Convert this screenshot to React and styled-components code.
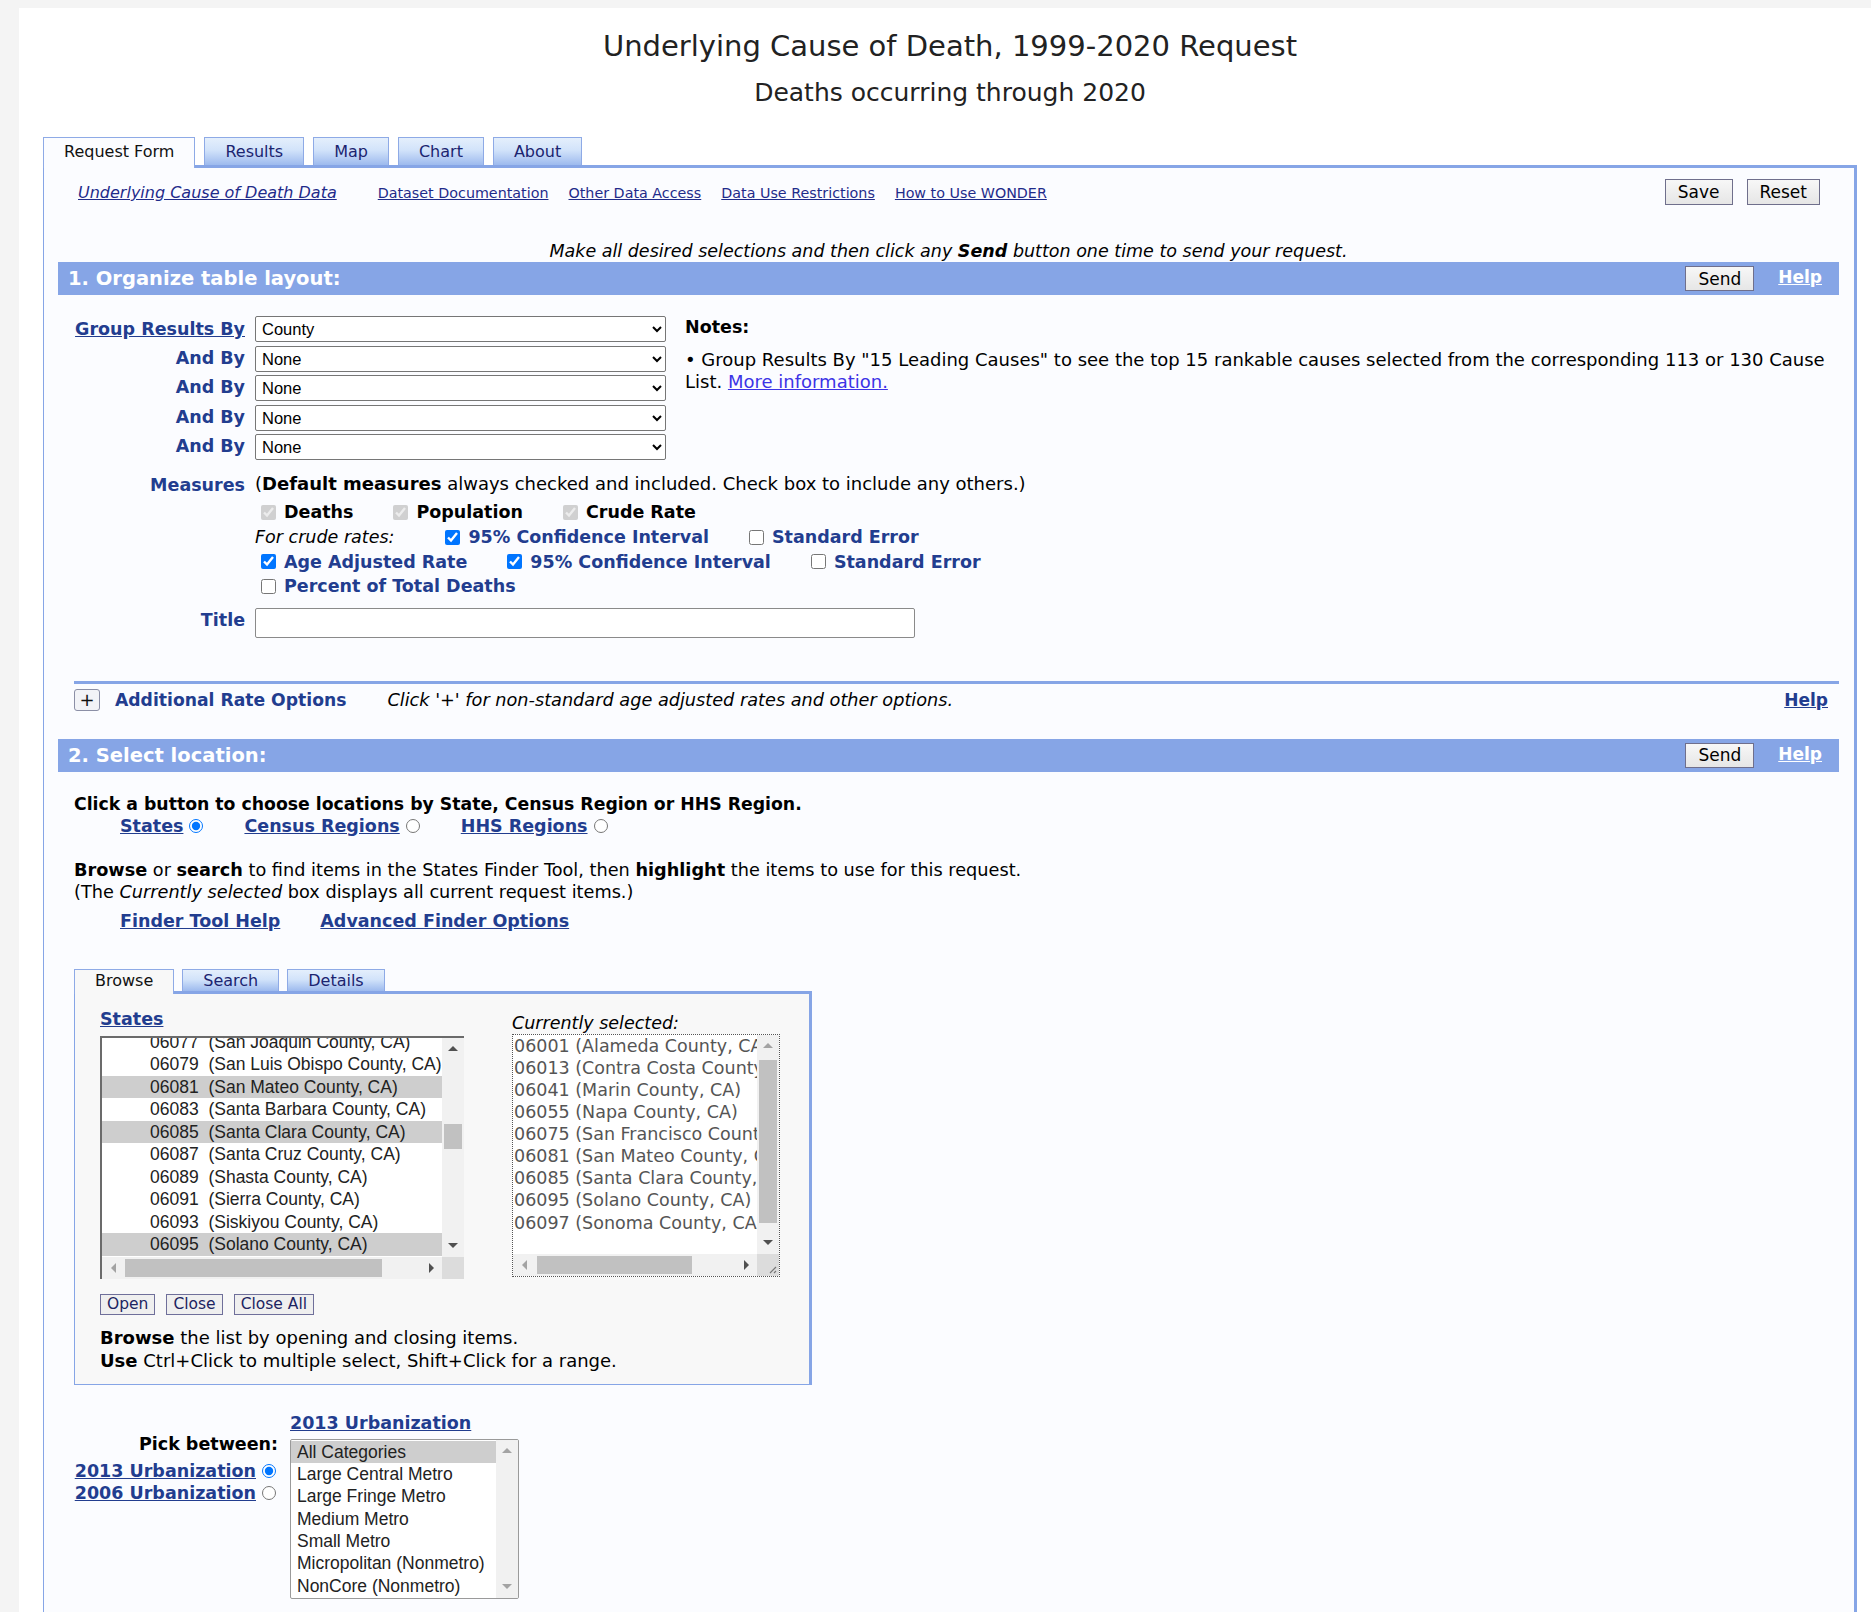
import styled, { createGlobalStyle } from "styled-components";

const VERDANA = '"DejaVu Sans", Verdana, sans-serif';
const ARIAL = '"Liberation Sans", Arial, sans-serif';
const BAR = "#86a5e6";
const LABEL = "#223d8f";
const LINK = "#1f2b8a";

const GlobalStyle = createGlobalStyle`
  html, body { margin: 0; padding: 0; background: #f4f4f4; }
  body { font-family: ${VERDANA}; color: #000; }
  * { box-sizing: border-box; }
`;

const states = [
  ["06077", "San Joaquin County, CA"],
  ["06079", "San Luis Obispo County, CA"],
  ["06081", "San Mateo County, CA", true],
  ["06083", "Santa Barbara County, CA"],
  ["06085", "Santa Clara County, CA", true],
  ["06087", "Santa Cruz County, CA"],
  ["06089", "Shasta County, CA"],
  ["06091", "Sierra County, CA"],
  ["06093", "Siskiyou County, CA"],
  ["06095", "Solano County, CA", true],
];

const selected = [
  "06001 (Alameda County, CA)",
  "06013 (Contra Costa County, CA)",
  "06041 (Marin County, CA)",
  "06055 (Napa County, CA)",
  "06075 (San Francisco County, CA)",
  "06081 (San Mateo County, CA)",
  "06085 (Santa Clara County, CA)",
  "06095 (Solano County, CA)",
  "06097 (Sonoma County, CA)",
];

const urban = [
  "All Categories",
  "Large Central Metro",
  "Large Fringe Metro",
  "Medium Metro",
  "Small Metro",
  "Micropolitan (Nonmetro)",
  "NonCore (Nonmetro)",
];

function Arrow({ dir, off }) {
  return (
    <ArrowCell>
      <Triangle $dir={dir} $off={off} />
    </ArrowCell>
  );
}

function VBar({ offset, size, upOff, downOff }) {
  return (
    <VTrackBar>
      <Arrow dir="up" off={upOff} />
      <VTrack>{size ? <VThumb $offset={offset} $size={size} /> : null}</VTrack>
      <Arrow dir="down" off={downOff} />
    </VTrackBar>
  );
}

function HBar({ offset, size }) {
  return (
    <HTrackBar>
      <Arrow dir="left" off />
      <HTrack>
        <HThumb $offset={offset} $size={size} />
      </HTrack>
      <Arrow dir="right" />
    </HTrackBar>
  );
}

export default function App() {
  return (
    <>
      <GlobalStyle />
      <Page>
        <Sheet>
          <Heading>Underlying Cause of Death, 1999-2020 Request</Heading>
          <SubHeading>Deaths occurring through 2020</SubHeading>

          <TabStrip>
            <Tab $active>Request Form</Tab>
            <Tab>Results</Tab>
            <Tab>Map</Tab>
            <Tab>Chart</Tab>
            <Tab>About</Tab>
          </TabStrip>

          <Panel>
            <TopLinks>
              <NavLink $italic>Underlying Cause of Death Data</NavLink>
              <NavLink>Dataset Documentation</NavLink>
              <NavLink>Other Data Access</NavLink>
              <NavLink>Data Use Restrictions</NavLink>
              <NavLink>How to Use WONDER</NavLink>
              <Actions>
                <ActionButton>Save</ActionButton>
                <ActionButton>Reset</ActionButton>
              </Actions>
            </TopLinks>

            <Instruction>
              Make all desired selections and then click any <b>Send</b> button one time to send your request.
            </Instruction>

            <SectionBar>
              <BarTitle>1. Organize table layout:</BarTitle>
              <BarButton>Send</BarButton>
              <BarHelp>Help</BarHelp>
            </SectionBar>

            <Organize>
              <GroupGrid>
                <FieldLabel $link>Group Results By</FieldLabel>
                <SelectBox defaultValue="County">
                  <option>County</option>
                </SelectBox>
                {[0, 1, 2, 3].map((i) => (
                  <FieldPair key={i}>
                    <FieldLabel>And By</FieldLabel>
                    <SelectBox defaultValue="None">
                      <option>None</option>
                    </SelectBox>
                  </FieldPair>
                ))}
              </GroupGrid>
              <Notes>
                <NotesTitle>Notes:</NotesTitle>
                <NotesText>
                  • Group Results By "15 Leading Causes" to see the top 15 rankable causes selected from the corresponding 113 or 130 Cause
                  List. <InfoLink>More information.</InfoLink>
                </NotesText>
              </Notes>
            </Organize>

            <FormRow $top={13}>
              <FieldLabel>Measures</FieldLabel>
              <div>
                <MeasureIntro>
                  (<b>Default measures</b> always checked and included. Check box to include any others.)
                </MeasureIntro>
                <CheckRow>
                  <CheckItem>
                    <Check type="checkbox" checked disabled readOnly />
                    <CheckText $plain>Deaths</CheckText>
                  </CheckItem>
                  <CheckItem>
                    <Check type="checkbox" checked disabled readOnly />
                    <CheckText $plain>Population</CheckText>
                  </CheckItem>
                  <CheckItem>
                    <Check type="checkbox" checked disabled readOnly />
                    <CheckText $plain>Crude Rate</CheckText>
                  </CheckItem>
                </CheckRow>
                <CheckRow>
                  <CrudeLabel>For crude rates:</CrudeLabel>
                  <CheckItem>
                    <Check type="checkbox" checked readOnly />
                    <CheckText>95% Confidence Interval</CheckText>
                  </CheckItem>
                  <CheckItem>
                    <Check type="checkbox" readOnly />
                    <CheckText>Standard Error</CheckText>
                  </CheckItem>
                </CheckRow>
                <CheckRow>
                  <CheckItem>
                    <Check type="checkbox" checked readOnly />
                    <CheckText>Age Adjusted Rate</CheckText>
                  </CheckItem>
                  <CheckItem>
                    <Check type="checkbox" checked readOnly />
                    <CheckText>95% Confidence Interval</CheckText>
                  </CheckItem>
                  <CheckItem>
                    <Check type="checkbox" readOnly />
                    <CheckText>Standard Error</CheckText>
                  </CheckItem>
                </CheckRow>
                <CheckRow>
                  <CheckItem>
                    <Check type="checkbox" readOnly />
                    <CheckText>Percent of Total Deaths</CheckText>
                  </CheckItem>
                </CheckRow>
              </div>
            </FormRow>

            <FormRow $top={9}>
              <FieldLabel>Title</FieldLabel>
              <TitleInput type="text" />
            </FormRow>

            <Divider />
            <AddlRow>
              <PlusBox>+</PlusBox>
              <AddlTitle>Additional Rate Options</AddlTitle>
              <AddlHint>Click '+' for non-standard age adjusted rates and other options.</AddlHint>
              <RightHelp>Help</RightHelp>
            </AddlRow>

            <SectionBar $top={28}>
              <BarTitle>2. Select location:</BarTitle>
              <BarButton>Send</BarButton>
              <BarHelp>Help</BarHelp>
            </SectionBar>

            <Location>
              <Lead>Click a button to choose locations by State, Census Region or HHS Region.</Lead>
              <RadioRow>
                <RadioItem>
                  <BlueLink>States</BlueLink>
                  <Radio type="radio" name="loc" defaultChecked />
                </RadioItem>
                <RadioItem>
                  <BlueLink>Census Regions</BlueLink>
                  <Radio type="radio" name="loc" />
                </RadioItem>
                <RadioItem>
                  <BlueLink>HHS Regions</BlueLink>
                  <Radio type="radio" name="loc" />
                </RadioItem>
              </RadioRow>

              <Para>
                <b>Browse</b> or <b>search</b> to find items in the States Finder Tool, then <b>highlight</b> the items to use for this request.
                <br />
                (The <i>Currently selected</i> box displays all current request items.)
              </Para>
              <LinkRow>
                <BlueLink>Finder Tool Help</BlueLink>
                <BlueLink>Advanced Finder Options</BlueLink>
              </LinkRow>

              <FinderTabs>
                <Tab $active $small $bg="#f8f8f8">Browse</Tab>
                <Tab $small>Search</Tab>
                <Tab $small>Details</Tab>
              </FinderTabs>
              <FinderPanel>
                <FinderCols>
                  <Column $w={364}>
                    <ColLabel>
                      <BlueLink>States</BlueLink>
                    </ColLabel>
                    <TreeBox>
                      <Viewport>
                        <ViewportInner $shift={-7}>
                          {states.map(([code, name, hl]) => (
                            <TreeRow key={code} $hl={hl}>
                              {code}  ({name})
                            </TreeRow>
                          ))}
                        </ViewportInner>
                      </Viewport>
                      <VBar offset={64} size={25} />
                      <HBar offset={1} size={257} />
                      <CornerCell />
                    </TreeBox>
                  </Column>
                  <Column $w={268}>
                    <SelLabel>Currently selected:</SelLabel>
                    <SelectedBox>
                      <Viewport>
                        {selected.map((s) => (
                          <SelRow key={s}>{s}</SelRow>
                        ))}
                      </Viewport>
                      <VBar offset={3} size={163} upOff />
                      <HBar offset={2} size={155} />
                      <CornerCell>
                        <Grip viewBox="0 0 22 22">
                          <path d="M19 13 L13 19 M19 17 L17 19" stroke="#777" strokeWidth="1.2" />
                        </Grip>
                      </CornerCell>
                    </SelectedBox>
                  </Column>
                </FinderCols>
                <SmallButtons>
                  <SmallButton>Open</SmallButton>
                  <SmallButton>Close</SmallButton>
                  <SmallButton>Close All</SmallButton>
                </SmallButtons>
                <HelpText>
                  <b>Browse</b> the list by opening and closing items.
                  <br />
                  <b>Use</b> Ctrl+Click to multiple select, Shift+Click for a range.
                </HelpText>
              </FinderPanel>

              <UrbanGrid>
                <PickCol>
                  <PickLine>Pick between:</PickLine>
                  <PickLine $top={5}>
                    <BlueLink>2013 Urbanization</BlueLink>
                    <Radio type="radio" name="urb" defaultChecked />
                  </PickLine>
                  <PickLine>
                    <BlueLink>2006 Urbanization</BlueLink>
                    <Radio type="radio" name="urb" />
                  </PickLine>
                </PickCol>
                <UrbanHead>
                  <BlueLink>2013 Urbanization</BlueLink>
                </UrbanHead>
                <UrbanList>
                  <UrbanItems>
                    {urban.map((u, i) => (
                      <UrbanRow key={u} $hl={i === 0}>
                        {u}
                      </UrbanRow>
                    ))}
                  </UrbanItems>
                  <VBar upOff downOff />
                </UrbanList>
              </UrbanGrid>
            </Location>
          </Panel>
        </Sheet>
      </Page>
    </>
  );
}

const Page = styled.div`
  padding: 8px 0 0 19px;
  min-height: 1612px;
`;

const Sheet = styled.div`
  background: #fff;
  padding: 21px 14px 0 0;
`;

const Heading = styled.h1`
  margin: 0;
  padding-left: 24px;
  text-align: center;
  font-size: 29px;
  line-height: 34px;
  font-weight: normal;
  color: #222;
`;

const SubHeading = styled.h2`
  margin: 15px 0 0;
  padding-left: 24px;
  text-align: center;
  font-size: 25px;
  line-height: 30px;
  font-weight: normal;
  color: #222;
`;

const TabStrip = styled.div`
  display: flex;
  align-items: flex-start;
  gap: 9px;
  margin: 29px 0 0 24px;
`;

const FinderTabs = styled(TabStrip)`
  gap: 8px;
  margin: 37px 0 0;
`;

const Tab = styled.div`
  position: relative;
  z-index: ${(p) => (p.$active ? 1 : 0)};
  height: ${(p) => (p.$small ? 22 : 28) + (p.$active ? 3 : 0)}px;
  margin-bottom: ${(p) => (p.$active ? -3 : 0)}px;
  padding: 0 20px;
  border: 1px solid #8eaae6;
  border-bottom: none;
  font-size: 16px;
  line-height: ${(p) => (p.$small ? 22 : 28)}px;
  color: ${(p) => (p.$active ? "#111" : "#1b2470")};
  background: ${(p) =>
    p.$active ? p.$bg || "#fbfcff" : "linear-gradient(#e4effc, #d2e3fa 45%, #9dbaee)"};
`;

const Panel = styled.div`
  margin-left: 24px;
  padding: 0 15px 30px 14px;
  border-top: 3px solid ${BAR};
  border-right: 3px solid ${BAR};
  border-left: 1px solid ${BAR};
  background: #fbfcff;
  min-height: 1450px;
`;

const TopLinks = styled.div`
  display: flex;
  align-items: center;
  gap: 20px;
  height: 26px;
  margin-top: 11px;
  padding: 0 19px 0 20px;
`;

const NavLink = styled.a`
  font-size: ${(p) => (p.$italic ? 16 : 14.3)}px;
  line-height: 20px;
  padding-top: 2px;
  color: ${LINK};
  text-decoration: underline;
  font-style: ${(p) => (p.$italic ? "italic" : "normal")};
  margin-right: ${(p) => (p.$italic ? 21 : 0)}px;
`;

const Actions = styled.div`
  margin-left: auto;
  display: flex;
  gap: 14px;
`;

const ActionButton = styled.button`
  height: 26px;
  padding: 0 12px;
  font-family: ${VERDANA};
  font-size: 17px;
  color: #000;
  background: linear-gradient(#f7f7f7, #e6e6e6);
  border: 1px solid #6f6f8c;
  border-radius: 0;
`;

const Instruction = styled.div`
  margin-top: 36px;
  text-align: center;
  font-size: 17.5px;
  line-height: 21px;
  font-style: italic;
`;

const SectionBar = styled.div`
  display: flex;
  align-items: center;
  height: 33px;
  margin-top: ${(p) => p.$top ?? 0}px;
  padding: 0 17px 0 10px;
  background: ${BAR};
`;

const BarTitle = styled.div`
  flex: 1;
  color: #fff;
  font-size: 19.5px;
  font-weight: bold;
`;

const BarButton = styled(ActionButton)`
  height: 25px;
  padding: 0 12px;
  margin-right: 24px;
`;

const BarHelp = styled.a`
  color: #fff;
  font-weight: bold;
  font-size: 17px;
  margin-bottom: 3px;
  text-decoration: underline;
`;

const Organize = styled.div`
  display: flex;
  align-items: flex-start;
  margin-top: 21px;
`;

const GroupGrid = styled.div`
  display: grid;
  grid-template-columns: 187px 411px;
  column-gap: 10px;
  row-gap: 3.5px;
`;

const FieldPair = styled.div`
  display: contents;
`;

const FieldLabel = styled.div`
  text-align: right;
  align-self: ${(p) => (p.$link ? "center" : "start")};
  font-size: 17.5px;
  line-height: 24px;
  font-weight: bold;
  color: ${LABEL};
  text-decoration: ${(p) => (p.$link ? "underline" : "none")};
`;

const SelectBox = styled.select`
  height: 26px;
  font-family: ${ARIAL};
  font-size: 16.5px;
  color: #000;
  background: #fff;
  border: 1px solid #767676;
  border-radius: 2px;
  padding: 0 2px;
`;

const Notes = styled.div`
  flex: 1;
  margin-left: 19px;
  font-size: 18px;
  line-height: 22px;
`;

const NotesTitle = styled.div`
  font-weight: bold;
  font-size: 17.5px;
`;

const NotesText = styled.div`
  margin-top: 11px;
`;

const InfoLink = styled.a`
  color: #3d33e6;
  text-decoration: underline;
`;

const FormRow = styled.div`
  display: grid;
  grid-template-columns: 187px 1fr;
  column-gap: 10px;
  margin-top: ${(p) => p.$top}px;
  font-size: 18px;
  line-height: 22px;
`;

const MeasureIntro = styled.div`
  margin-bottom: 5px;
`;

const CheckRow = styled.div`
  display: flex;
  align-items: center;
  gap: 34px;
  height: 24.7px;
`;

const CheckItem = styled.label`
  display: flex;
  align-items: center;
  gap: 8px;
`;

const Check = styled.input`
  width: 15px;
  height: 15px;
  margin: 0 0 0 6px;
`;

const CheckText = styled.span`
  font-weight: bold;
  font-size: 17.5px;
  color: ${(p) => (p.$plain ? "#000" : LABEL)};
`;

const CrudeLabel = styled.span`
  font-style: italic;
  font-size: 17.5px;
  margin-right: 11px;
`;

const TitleInput = styled.input`
  width: 660px;
  height: 30px;
  border: 1px solid #8a8a8a;
  border-radius: 2px;
  background: #fff;
`;

const Divider = styled.div`
  margin: 43px 0 0 16px;
  border-top: 3px solid ${BAR};
`;

const AddlRow = styled.div`
  display: flex;
  align-items: center;
  margin: 5px 0 0 16px;
  padding-right: 11px;
  height: 22px;
`;

const PlusBox = styled.div`
  width: 26px;
  height: 22px;
  border: 1px solid #8b8fa6;
  border-radius: 3px;
  background: #f2f3f7;
  text-align: center;
  font-size: 18px;
  line-height: 19px;
  color: #111;
`;

const AddlTitle = styled.div`
  margin-left: 15px;
  font-size: 17.2px;
  font-weight: bold;
  color: ${LABEL};
`;

const AddlHint = styled.div`
  flex: 1;
  margin-left: 41px;
  font-size: 17.7px;
  font-style: italic;
`;

const RightHelp = styled.a`
  font-size: 17px;
  font-weight: bold;
  color: ${LABEL};
  text-decoration: underline;
`;

const Location = styled.div`
  padding-left: 16px;
  font-size: 18px;
  line-height: 22px;
`;

const Lead = styled.div`
  margin-top: 21px;
  font-weight: bold;
  font-size: 17.3px;
`;

const RadioRow = styled.div`
  display: flex;
  gap: 39px;
  padding-left: 46px;
`;

const RadioItem = styled.div`
  display: flex;
  align-items: center;
  gap: 4px;
`;

const Radio = styled.input`
  width: 14px;
  height: 14px;
  margin: 0 2px 0 2px;
`;

const BlueLink = styled.a`
  font-weight: bold;
  color: ${LABEL};
  text-decoration: underline;
  font-size: 17.5px;
  white-space: nowrap;
`;

const Para = styled.div`
  margin-top: 22px;
  font-size: 17.7px;
`;

const LinkRow = styled.div`
  display: flex;
  gap: 40px;
  margin-top: 7px;
  padding-left: 46px;
`;

const FinderPanel = styled.div`
  width: 738px;
  padding: 14px 28px 12px 25px;
  background: #f8f8f8;
  border-top: 3px solid ${BAR};
  border-right: 3px solid ${BAR};
  border-left: 1px solid ${BAR};
  border-bottom: 1px solid ${BAR};
`;

const FinderCols = styled.div`
  display: flex;
  gap: 48px;
`;

const Column = styled.div`
  width: ${(p) => p.$w}px;
`;

const ColLabel = styled.div`
  margin-bottom: 6px;
`;

const SelLabel = styled.div`
  margin-top: 4px;
  font-style: italic;
  font-size: 17.5px;
`;

const ScrollFrame = styled.div`
  display: grid;
  grid-template-columns: 1fr 22px;
  grid-template-rows: 1fr 22px;
  height: 243px;
  background: #fff;
  overflow: hidden;
`;

const TreeBox = styled(ScrollFrame)`
  border-top: 2px solid #6b6b6b;
  border-left: 2px solid #6b6b6b;
`;

const SelectedBox = styled(ScrollFrame)`
  border: 1px dotted #555;
`;

const Viewport = styled.div`
  overflow: hidden;
  min-width: 0;
`;

const ViewportInner = styled.div`
  margin-top: ${(p) => p.$shift}px;
`;

const TreeRow = styled.div`
  height: 22.5px;
  padding-left: 48px;
  white-space: pre;
  font-family: ${ARIAL};
  font-size: 17.5px;
  line-height: 22.5px;
  color: #222;
  background: ${(p) => (p.$hl ? "#cecece" : "transparent")};
`;

const SelRow = styled.div`
  padding-left: 1px;
  white-space: pre;
  font-size: 17.5px;
  line-height: 22.1px;
  color: #555;
`;

const VTrackBar = styled.div`
  display: flex;
  flex-direction: column;
  background: #f1f1f1;
`;

const HTrackBar = styled.div`
  display: flex;
  background: #f1f1f1;
`;

const VTrack = styled.div`
  flex: 1;
`;

const HTrack = styled.div`
  flex: 1;
  display: flex;
  align-items: center;
`;

const VThumb = styled.div`
  margin: ${(p) => p.$offset}px 2px 0;
  height: ${(p) => p.$size}px;
  background: #c1c1c1;
`;

const HThumb = styled.div`
  margin-left: ${(p) => p.$offset}px;
  width: ${(p) => p.$size}px;
  height: 18px;
  background: #c1c1c1;
`;

const ArrowCell = styled.div`
  width: 22px;
  height: 22px;
  flex: none;
  display: flex;
  align-items: center;
  justify-content: center;
`;

const Triangle = styled.div`
  width: 0;
  height: 0;
  ${(p) => {
    const c = p.$off ? "#a3a3a3" : "#505050";
    if (p.$dir === "up") return `border-left: 5px solid transparent; border-right: 5px solid transparent; border-bottom: 5px solid ${c};`;
    if (p.$dir === "down") return `border-left: 5px solid transparent; border-right: 5px solid transparent; border-top: 5px solid ${c};`;
    if (p.$dir === "left") return `border-top: 5px solid transparent; border-bottom: 5px solid transparent; border-right: 5px solid ${c};`;
    return `border-top: 5px solid transparent; border-bottom: 5px solid transparent; border-left: 5px solid ${c};`;
  }}
`;

const CornerCell = styled.div`
  background: #dcdcdc;
`;

const Grip = styled.svg`
  display: block;
  width: 22px;
  height: 22px;
`;

const SmallButtons = styled.div`
  display: flex;
  gap: 11px;
  margin-top: 15px;
`;

const SmallButton = styled.button`
  height: 21px;
  padding: 0 6px;
  font-family: ${VERDANA};
  font-size: 15.5px;
  line-height: 19px;
  color: #1c2461;
  background: #efefef;
  border: 1px solid #6f6f9a;
  border-radius: 0;
`;

const HelpText = styled.div`
  margin-top: 11px;
  font-size: 18px;
  line-height: 23px;
`;

const UrbanGrid = styled.div`
  display: grid;
  grid-template-columns: 204px 229px;
  grid-template-rows: auto auto;
  column-gap: 12px;
  row-gap: 5px;
  margin-top: 27px;
`;

const PickCol = styled.div`
  grid-row: 1 / span 2;
  padding-top: 21px;
  text-align: right;
`;

const PickLine = styled.div`
  display: flex;
  align-items: center;
  justify-content: flex-end;
  gap: 4px;
  margin-top: ${(p) => p.$top ?? 0}px;
  font-weight: bold;
  font-size: 17.5px;
  white-space: nowrap;
`;

const UrbanHead = styled.div`
  grid-column: 2;
`;

const UrbanList = styled.div`
  grid-column: 2;
  display: grid;
  grid-template-columns: 1fr 22px;
  height: 160px;
  border: 1px solid #9a9a9a;
  border-radius: 2px;
  background: #fff;
  overflow: hidden;
`;

const UrbanItems = styled.div`
  padding-top: 1px;
`;

const UrbanRow = styled.div`
  padding-left: 6px;
  font-family: ${ARIAL};
  font-size: 17.5px;
  line-height: 22.3px;
  color: #222;
  background: ${(p) => (p.$hl ? "#cecece" : "transparent")};
`;
